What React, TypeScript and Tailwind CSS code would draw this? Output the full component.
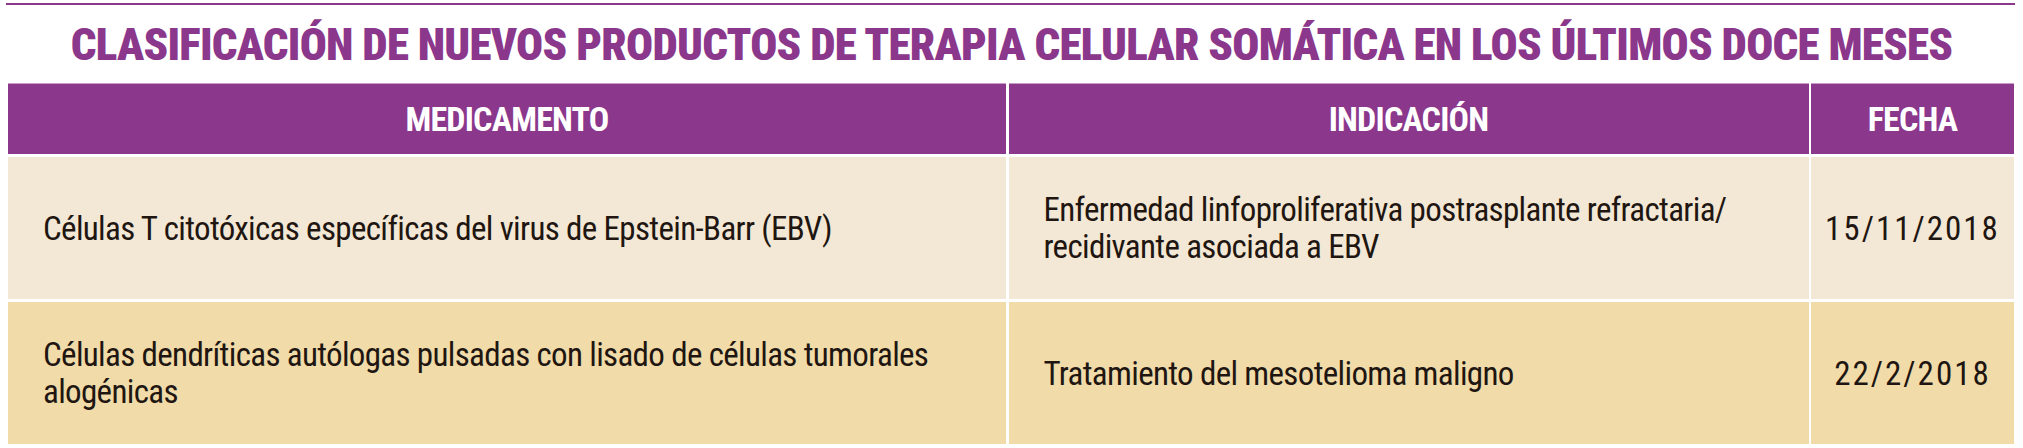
export default function App() {
  const body = 'text-[33px] leading-[37px] tracking-[-0.65px] text-[#1f1611] font-["Roboto_Condensed",Roboto,sans-serif]';
  const date = 'text-[33px] leading-[37px] tracking-[2px] text-[#1f1611] font-["Roboto_Condensed",Roboto,sans-serif]';
  return (
    <div className="w-[2023px] h-[448px] bg-white">
      <div className="pt-[3px] pl-[6px] pr-[8px]">
        <div className="h-[2px] bg-[#8b378c]" />
      </div>
      <h1 className='mt-[17px] h-[45px] text-center text-[45px] leading-[45px] font-black tracking-[-0.75px] text-[#8b378c] font-["Roboto_Condensed",Roboto,sans-serif]'>
        CLASIFICACIÓN DE NUEVOS PRODUCTOS DE TERAPIA CELULAR SOMÁTICA EN LOS ÚLTIMOS DOCE MESES
      </h1>
      <div className="mt-[16px] ml-[8px] grid grid-cols-[998px_800px_203px] grid-rows-[71px_142px_142px] gap-x-[2.5px] gap-y-[3px]">
        {['MEDICAMENTO', 'INDICACIÓN', 'FECHA'].map((h) => (
          <div
            key={h}
            className='flex items-center justify-center bg-[#8b378c] border-t border-[#c69bc6] text-white text-[34px] leading-none font-bold tracking-[-0.8px] font-["Roboto_Condensed",Roboto,sans-serif]'
          >
            {h}
          </div>
        ))}

        <div className={`flex items-center bg-[#f3e8d5] pl-[35px] pr-4 ${body}`}>
          Células T citotóxicas específicas del virus de Epstein-Barr (EBV)
        </div>
        <div className={`flex items-center bg-[#f3e8d5] pl-[35px] pr-4 ${body}`}>
          <span>
            Enfermedad linfoproliferativa postrasplante refractaria/
            <br />
            recidivante asociada a EBV
          </span>
        </div>
        <div className={`flex items-center justify-center bg-[#f3e8d5] ${date}`}>15/11/2018</div>

        <div className={`flex items-center bg-[#f0dba9] pl-[35px] pr-4 ${body}`}>
          <span>
            Células dendríticas autólogas pulsadas con lisado de células tumorales
            <br />
            alogénicas
          </span>
        </div>
        <div className={`flex items-center bg-[#f0dba9] pl-[35px] pr-4 ${body}`}>
          Tratamiento del mesotelioma maligno
        </div>
        <div className={`flex items-center justify-center bg-[#f0dba9] ${date}`}>22/2/2018</div>
      </div>
    </div>
  );
}
